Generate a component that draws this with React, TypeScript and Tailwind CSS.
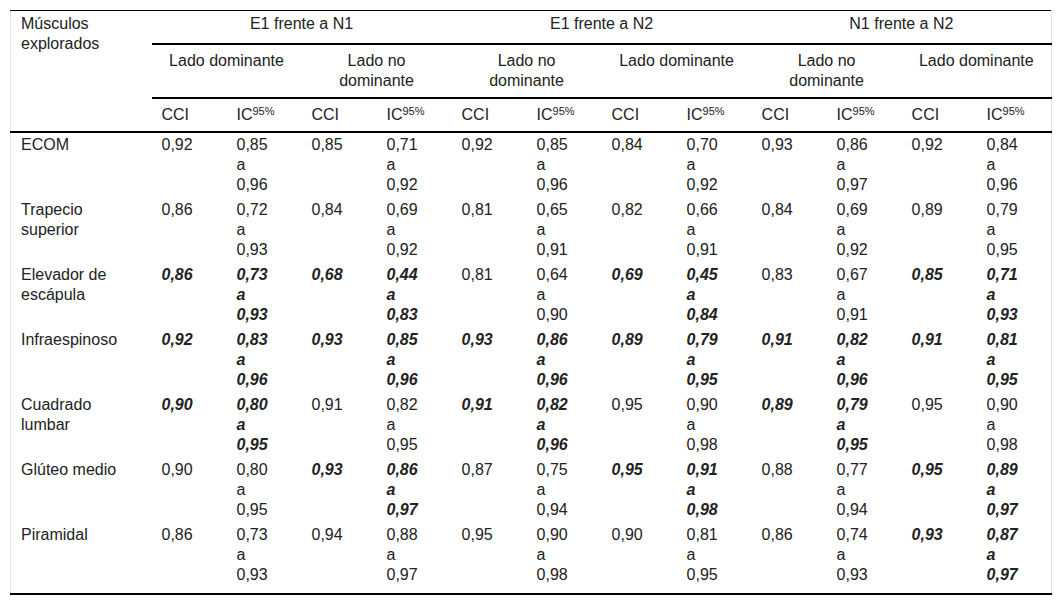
type Cell = { v: string; b?: boolean };

type Row = { name: string[]; cells: Cell[] };

// "0,85|0,96" is a range cell; a leading "*" marks bold italic
const c = (s: string): Cell => (s.startsWith("*") ? { v: s.slice(1), b: true } : { v: s });

const rows: Row[] = [
  {
    name: ["ECOM"],
    cells: ["0,92", "0,85|0,96", "0,85", "0,71|0,92", "0,92", "0,85|0,96", "0,84", "0,70|0,92", "0,93", "0,86|0,97", "0,92", "0,84|0,96"].map(c),
  },
  {
    name: ["Trapecio", "superior"],
    cells: ["0,86", "0,72|0,93", "0,84", "0,69|0,92", "0,81", "0,65|0,91", "0,82", "0,66|0,91", "0,84", "0,69|0,92", "0,89", "0,79|0,95"].map(c),
  },
  {
    name: ["Elevador de", "escápula"],
    cells: ["*0,86", "*0,73|0,93", "*0,68", "*0,44|0,83", "0,81", "0,64|0,90", "*0,69", "*0,45|0,84", "0,83", "0,67|0,91", "*0,85", "*0,71|0,93"].map(c),
  },
  {
    name: ["Infraespinoso"],
    cells: ["*0,92", "*0,83|0,96", "*0,93", "*0,85|0,96", "*0,93", "*0,86|0,96", "*0,89", "*0,79|0,95", "*0,91", "*0,82|0,96", "*0,91", "*0,81|0,95"].map(c),
  },
  {
    name: ["Cuadrado", "lumbar"],
    cells: ["*0,90", "*0,80|0,95", "0,91", "0,82|0,95", "*0,91", "*0,82|0,96", "0,95", "0,90|0,98", "*0,89", "*0,79|0,95", "0,95", "0,90|0,98"].map(c),
  },
  {
    name: ["Glúteo medio"],
    cells: ["0,90", "0,80|0,95", "*0,93", "*0,86|0,97", "0,87", "0,75|0,94", "*0,95", "*0,91|0,98", "0,88", "0,77|0,94", "*0,95", "*0,89|0,97"].map(c),
  },
  {
    name: ["Piramidal"],
    cells: ["0,86", "0,73|0,93", "0,94", "0,88|0,97", "0,95", "0,90|0,98", "0,90", "0,81|0,95", "0,86", "0,74|0,93", "*0,93", "*0,87|0,97"].map(c),
  },
];

const groups = ["E1 frente a N1", "E1 frente a N2", "N1 frente a N2"];
const sides = [
  ["Lado dominante", "Lado no dominante"],
  ["Lado no dominante", "Lado dominante"],
  ["Lado no dominante", "Lado dominante"],
];

function Value({ cell }: { cell: Cell }) {
  const parts = cell.v.split("|");
  return (
    <span className={cell.b ? "font-bold italic" : ""}>
      {parts.length === 1 ? (
        parts[0]
      ) : (
        <>
          <span className="block">{parts[0]}</span>
          <span className="block">a</span>
          <span className="block">{parts[1]}</span>
        </>
      )}
    </span>
  );
}

export default function App() {
  return (
    <div className="bg-white pt-[10px] pl-[10px] w-[1062px] h-[604px] font-['Liberation_Sans',Arial,sans-serif] text-[16px] leading-[20px] text-[#222]">
      <table className="table-fixed border-collapse w-[1041px] border-t border-t-black border-b-2 border-b-black border-x border-x-[#e2e2e2]">
        <colgroup>
          <col className="w-[141px]" />
          {Array.from({ length: 12 }).map((_, i) => (
            <col key={i} className="w-[75px]" />
          ))}
        </colgroup>
        <thead>
          <tr>
            <th rowSpan={3} className="align-top text-left font-normal px-2.5 pt-[3px] border-b-2 border-b-black">
              Músculos
              <br />
              explorados
            </th>
            {groups.map((g) => (
              <th key={g} colSpan={4} className="align-top font-normal text-center px-2.5 pt-[3px] pb-[9px] border-b-2 border-b-black">
                {g}
              </th>
            ))}
          </tr>
          <tr>
            {sides.flat().map((s, i) => (
              <th key={i} colSpan={2} className="align-top font-normal text-center px-2.5 py-1.5 border-b-2 border-b-black">
                {s}
              </th>
            ))}
          </tr>
          <tr>
            {Array.from({ length: 6 }).map((_, i) => [
              <th key={`c${i}`} className="font-normal text-left px-2.5 py-1.5 border-b-2 border-b-black">
                CCI
              </th>,
              <th key={`i${i}`} className="font-normal text-left px-2.5 py-1.5 border-b-2 border-b-black">
                IC<sup className="text-[11px]">95%</sup>
              </th>,
            ])}
          </tr>
        </thead>
        <tbody>
          {rows.map((r, ri) => {
            const pad = ri === rows.length - 1 ? "pt-[2px] pb-[8px]" : "pt-[2px] pb-[3px]";
            return (
              <tr key={r.name.join(" ")}>
                <td className={`align-top px-2.5 ${pad}`}>
                  {r.name.map((n) => (
                    <span key={n} className="block">
                      {n}
                    </span>
                  ))}
                </td>
                {r.cells.map((cell, i) => (
                  <td key={i} className={`align-top px-2.5 ${pad}`}>
                    <Value cell={cell} />
                  </td>
                ))}
              </tr>
            );
          })}
        </tbody>
      </table>
    </div>
  );
}
